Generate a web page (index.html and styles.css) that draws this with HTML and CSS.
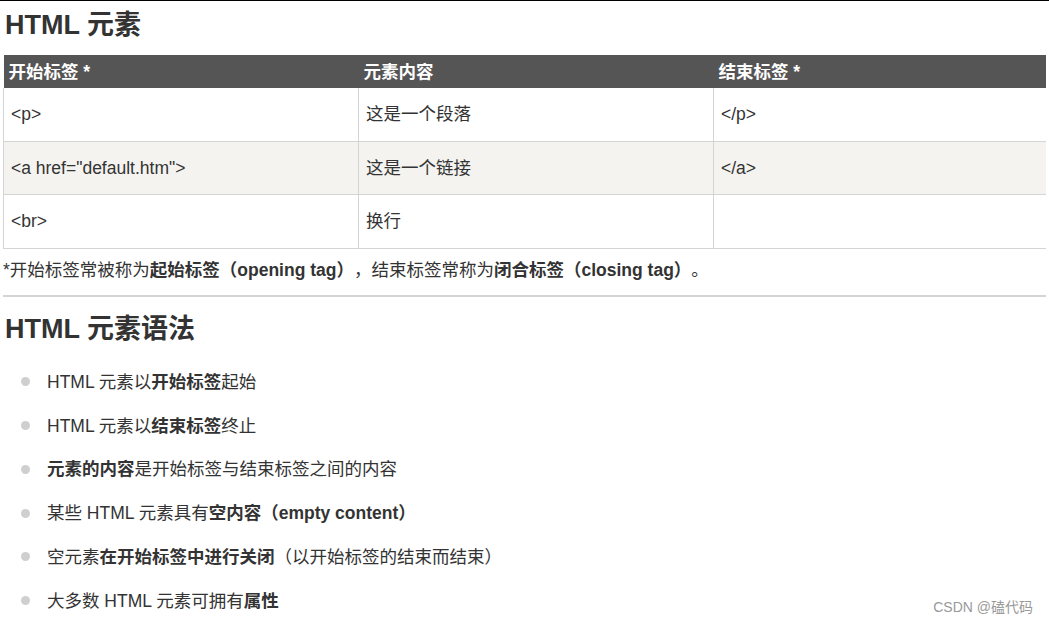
FILE: index.html
```html
<!DOCTYPE html>
<html lang="zh">
<head>
<meta charset="utf-8">
<title>HTML 元素</title>
<link rel="stylesheet" href="styles.css">
</head>
<body>
<main class="page">
  <h2 class="title first">HTML 元素</h2>
  <table class="ref">
    <thead>
      <tr><th class="c1">开始标签 *</th><th class="c2">元素内容</th><th class="c3">结束标签 *</th></tr>
    </thead>
    <tbody>
      <tr><td>&lt;p&gt;</td><td>这是一个段落</td><td>&lt;/p&gt;</td></tr>
      <tr class="alt"><td>&lt;a href="default.htm"&gt;</td><td>这是一个链接</td><td>&lt;/a&gt;</td></tr>
      <tr><td>&lt;br&gt;</td><td>换行</td><td></td></tr>
    </tbody>
  </table>
  <p class="note">*开始标签常被称为<b>起始标签（opening tag）</b>，结束标签常称为<b>闭合标签（closing tag）</b>。</p>
  <hr class="rule">
  <h2 class="title">HTML 元素语法</h2>
  <ul class="points">
    <li>HTML 元素以<b>开始标签</b>起始</li>
    <li>HTML 元素以<b>结束标签</b>终止</li>
    <li><b>元素的内容</b>是开始标签与结束标签之间的内容</li>
    <li>某些 HTML 元素具有<b>空内容（empty content）</b></li>
    <li>空元素<b>在开始标签中进行关闭</b>（以开始标签的结束而结束）</li>
    <li>大多数 HTML 元素可拥有<b>属性</b></li>
  </ul>
</main>
<div class="watermark">CSDN @磕代码</div>
</body>
</html>
```
FILE: styles.css
```css
html, body {
  margin: 0;
  padding: 0;
  background: #fff;
}
body {
  border-top: 1px solid #000;
  font-family: "Liberation Sans", "Noto Sans CJK SC", sans-serif;
  font-size: 17.5px;
  color: #333;
  width: 1049px;
  height: 621px;
  overflow: hidden;
  position: relative;
  text-spacing-trim: space-all;
}
.page {
  padding: 0 3px;
}
.title {
  font-size: 27px;
  line-height: 34px;
  font-weight: bold;
  margin: 0;
  padding-left: 2px;
  color: #333;
}
.title.first {
  margin-top: 7px;
}
.ref {
  border-collapse: collapse;
  width: 1043px;
  margin-top: 13px;
  table-layout: fixed;
}
.ref th {
  background: #555;
  color: #fff;
  font-weight: bold;
  text-align: left;
  height: 33px;
  padding: 0 5px;
  line-height: 20px;
  vertical-align: middle;
}
.ref .c1 { width: 345px; }
.ref .c2 { width: 345px; }
.ref td {
  border: 1px solid #d4d4d4;
  border-top: none;
  height: 52.6px;
  padding: 0 7px;
  line-height: 20px;
  vertical-align: middle;
}
.ref td:last-child {
  border-right: none;
}
.ref tr.alt td {
  background: #f4f3f0;
}
.note {
  margin: 8px 0 0;
  line-height: 26px;
}
.note b { font-weight: bold; }
.rule {
  border: none;
  height: 2px;
  background: #d4d4d4;
  margin: 12px 0 0;
}
.title:not(.first) {
  margin-top: 15px;
}
.points {
  list-style: none;
  margin: 23px 0 0;
  padding: 0 0 0 18px;
}
.points li {
  display: flex;
  align-items: center;
  line-height: 26px;
  margin-bottom: 17.8px;
}
.points li::before {
  content: "";
  width: 9px;
  height: 9px;
  border-radius: 50%;
  background: #cfcfcf;
  margin-right: 17px;
  flex: none;
}
.points b { white-space: pre; }
.watermark {
  position: absolute;
  right: 16px;
  top: 596px;
  font-size: 14px;
  line-height: 20px;
  color: #999;
}
```
